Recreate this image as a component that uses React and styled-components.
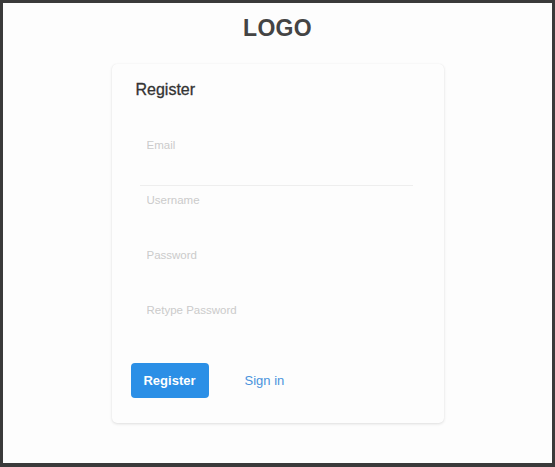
import styled, { createGlobalStyle } from 'styled-components'

const GlobalStyle = createGlobalStyle`
  html, body { margin: 0; padding: 0; }
  body {
    font-family: "Liberation Sans", Arial, sans-serif;
    background: #3a3a3a;
  }
`;

const Frame = styled.div`
  width: 555px;
  height: 467px;
  box-sizing: border-box;
  border: 3px solid #3a3a3a;
  border-bottom-width: 4px;
  background: #fdfdfd;
  display: flex;
  flex-direction: column;
  align-items: center;
`;

const Logo = styled.h1`
  margin: 12px 0 0;
  font-size: 23px;
  line-height: 26px;
  font-weight: 700;
  color: #444;
  letter-spacing: 0.3px;
`;

const Card = styled.div`
  margin-top: 23px;
  width: 332px;
  height: 359px;
  box-sizing: border-box;
  background: #fdfdfd;
  border-radius: 5px;
  box-shadow: 0 1px 3px rgba(0, 0, 0, 0.12), 0 0 1px rgba(0, 0, 0, 0.06);
  padding: 16px 20px 0 19px;
  display: flex;
  flex-direction: column;
`;

const Title = styled.h2`
  margin: 0 0 0 5px;
  font-size: 16px;
  line-height: 20px;
  font-weight: 400;
  -webkit-text-stroke: 0.3px #333;
  color: #333;
`;

const Fields = styled.div`
  margin-top: 31px;
  display: flex;
  flex-direction: column;
`;

const Field = styled.div`
  height: 55px;
  margin: 0 11px 0 9px;
  border-bottom: 1px solid ${({ active }) => (active ? '#eeeeee' : 'transparent')};
  box-sizing: border-box;
`;

const Input = styled.input`
  display: block;
  width: 100%;
  box-sizing: border-box;
  border: none;
  outline: none;
  background: transparent;
  padding: 8px 7px;
  font-family: "Liberation Sans", Arial, sans-serif;
  font-size: 11.5px;
  color: #555;
  &::placeholder { color: #cbcbcb; }
`;

const Actions = styled.div`
  margin-top: 12px;
  display: flex;
  align-items: center;
  gap: 36px;
`;

const Button = styled.button`
  width: 78px;
  height: 35px;
  border: none;
  border-radius: 4px;
  background: #2b8fe6;
  color: #fff;
  font-family: "Liberation Sans", Arial, sans-serif;
  font-size: 13px;
  font-weight: 700;
  cursor: pointer;
`;

const Link = styled.a`
  color: #4a93dc;
  font-size: 13px;
  text-decoration: none;
  cursor: pointer;
`;

const fields = [
  { name: 'email', label: 'Email', type: 'email', active: true },
  { name: 'username', label: 'Username', type: 'text' },
  { name: 'password', label: 'Password', type: 'password' },
  { name: 'retype', label: 'Retype Password', type: 'password' },
]

const App = () => {
  return <>
    <GlobalStyle />
    <Frame>
      <Logo>LOGO</Logo>
      <Card>
        <Title>Register</Title>
        <Fields>
          {fields.map((f) => (
            <Field key={f.name} active={f.active}>
              <Input type={f.type} placeholder={f.label} />
            </Field>
          ))}
        </Fields>
        <Actions>
          <Button>Register</Button>
          <Link>Sign in</Link>
        </Actions>
      </Card>
    </Frame>
  </>
};

export default App;
